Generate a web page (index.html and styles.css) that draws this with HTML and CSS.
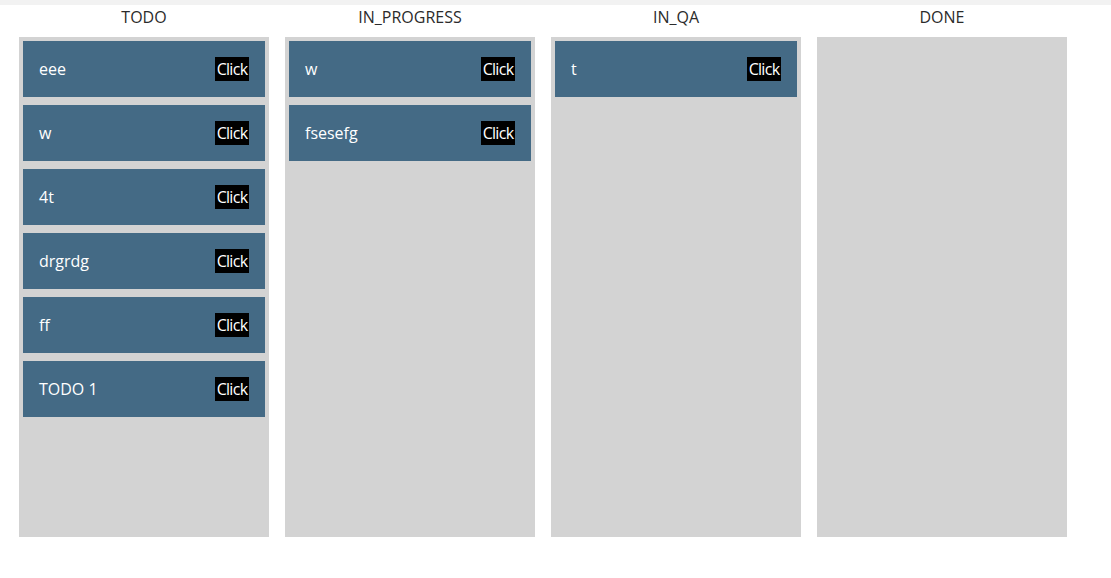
FILE: index.html
```html
<!DOCTYPE html>
<html>
<head>
<meta charset="utf-8">
<link rel="stylesheet" href="styles.css">
</head>
<body>
<div class="topbar"></div>
<div class="board">
  <div class="column">
    <div class="title">TODO</div>
    <div class="list">
      <div class="card"><span class="name">eee</span><button class="btn">Click</button></div>
      <div class="card"><span class="name">w</span><button class="btn">Click</button></div>
      <div class="card"><span class="name">4t</span><button class="btn">Click</button></div>
      <div class="card"><span class="name">drgrdg</span><button class="btn">Click</button></div>
      <div class="card"><span class="name">ff</span><button class="btn">Click</button></div>
      <div class="card"><span class="name">TODO 1</span><button class="btn">Click</button></div>
    </div>
  </div>
  <div class="column">
    <div class="title">IN_PROGRESS</div>
    <div class="list">
      <div class="card"><span class="name">w</span><button class="btn">Click</button></div>
      <div class="card"><span class="name">fsesefg</span><button class="btn">Click</button></div>
    </div>
  </div>
  <div class="column">
    <div class="title">IN_QA</div>
    <div class="list">
      <div class="card"><span class="name">t</span><button class="btn">Click</button></div>
    </div>
  </div>
  <div class="column">
    <div class="title">DONE</div>
    <div class="list"></div>
  </div>
</div>
</body>
</html>
```
FILE: styles.css
```css
html, body {
  margin: 0;
  padding: 0;
  background: #ffffff;
  font-family: "Open Sans", "Noto Sans", sans-serif;
}
.topbar {
  height: 5px;
  background: #f2f2f2;
}
.board {
  display: flex;
  gap: 16px;
  padding-left: 19px;
}
.column {
  width: 250px;
  display: flex;
  flex-direction: column;
}
.title {
  height: 32px;
  box-sizing: border-box;
  padding-top: 2px;
  text-align: center;
  font-size: 16px;
  line-height: 20px;
  color: #2b2b2b;
}
.list {
  height: 500px;
  box-sizing: border-box;
  background: #d3d3d3;
  padding: 4px;
  display: flex;
  flex-direction: column;
  gap: 8px;
}
.card {
  height: 56px;
  flex: none;
  box-sizing: border-box;
  background: #446a85;
  padding: 0 16px;
  display: flex;
  align-items: center;
  justify-content: space-between;
  color: #ffffff;
  font-size: 16px;
}
.btn {
  background: #000000;
  color: #ffffff;
  border: none;
  padding: 0;
  margin: 0;
  width: 34px;
  height: 24px;
  font-family: "Open Sans", "Noto Sans", sans-serif;
  font-size: 16px;
  line-height: 24px;
  letter-spacing: -0.7px;
  text-align: center;
  overflow: hidden;
  white-space: nowrap;
}
```
